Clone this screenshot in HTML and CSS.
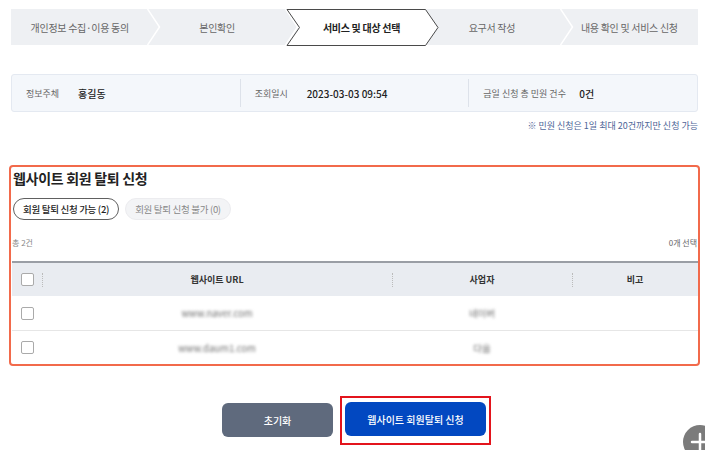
FILE: index.html
```
<!DOCTYPE html>
<html>
<head>
  <meta charset="UTF-8">
  <link rel="stylesheet" href="styles.css">
</head>
<body>
  <div class="page">
    <div class="stepper">
      <div class="step">개인정보 수집·이용 동의
        <svg class="sep" width="14" height="36" viewBox="0 0 14 36"><polyline points="0.5,0 12.5,18 0.5,36" fill="none" stroke="#fff" stroke-width="1.5"/></svg>
      </div>
      <div class="step">본인확인
        <svg class="sep" width="14" height="36" viewBox="0 0 14 36"><polyline points="0.5,0 12.5,18 0.5,36" fill="none" stroke="#fff" stroke-width="1.5"/></svg>
      </div>
      <div class="step active">
        <svg class="arrow" width="153" height="37" viewBox="0 0 153 37"><polygon points="1,0.5 139.5,0.5 152,18.5 139.5,36.5 1,36.5 13.5,18.5" fill="#fff" stroke="#4a4a4a" stroke-width="1"/></svg>
        <span class="step-label">서비스 및 대상 선택</span>
      </div>
      <div class="step">요구서 작성
        <svg class="sep" width="14" height="36" viewBox="0 0 14 36"><polyline points="0.5,0 12.5,18 0.5,36" fill="none" stroke="#fff" stroke-width="1.5"/></svg>
      </div>
      <div class="step">내용 확인 및 서비스 신청</div>
    </div>

    <div class="info-box">
      <div class="info-item"><span class="info-label">정보주체</span><span class="info-value">홍길동</span></div>
      <div class="info-item"><span class="info-label">조회일시</span><span class="info-value">2023-03-03 09:54</span></div>
      <div class="info-item"><span class="info-label wide">금일 신청 총 민원 건수</span><span class="info-value">0건</span></div>
    </div>
    <p class="note">※ 민원 신청은 1일 최대 20건까지만 신청 가능</p>

    <div class="panel">
      <h2 class="panel-title">웹사이트 회원 탈퇴 신청</h2>
      <div class="pills">
        <button class="pill active">회원 탈퇴 신청 가능 (2)</button>
        <button class="pill">회원 탈퇴 신청 불가 (0)</button>
      </div>
      <div class="count-row">
        <span>총 2건</span>
        <span>0개 선택</span>
      </div>
      <table class="site-table">
        <thead>
          <tr>
            <th class="col-check"><span class="checkbox"></span></th>
            <th class="col-url">웹사이트 URL</th>
            <th class="col-biz">사업자</th>
            <th class="col-note">비고</th>
          </tr>
        </thead>
        <tbody>
          <tr>
            <td class="col-check"><span class="checkbox"></span></td>
            <td><span class="blurred">www.naver.com</span></td>
            <td><span class="blurred">네이버</span></td>
            <td></td>
          </tr>
          <tr>
            <td class="col-check"><span class="checkbox"></span></td>
            <td><span class="blurred">www.daum1.com</span></td>
            <td><span class="blurred">다음</span></td>
            <td></td>
          </tr>
        </tbody>
      </table>
    </div>

    <div class="actions">
      <button class="btn btn-reset">초기화</button>
      <div class="highlight">
        <button class="btn btn-primary">웹사이트 회원탈퇴 신청</button>
      </div>
    </div>
  </div>
  <div class="fab">
    <svg width="34" height="34" viewBox="0 0 34 34"><path d="M17 9v16M9 17h16" stroke="#fff" stroke-width="2.5" stroke-linecap="round"/></svg>
  </div>
</body>
</html>
```

FILE: styles.css
```
body { margin: 0; width: 705px; height: 450px; overflow: hidden; background: #fff; font-family: "Noto Sans CJK KR", "Noto Sans", sans-serif; color: #222; position: relative; }
.page { padding: 9px 5px 0 9px; }
/* Stepper */
.stepper { display: flex; height: 36px; margin: 0 2px; background: #eef0f3; }
.step { flex: 1; position: relative; display: flex; align-items: center; justify-content: center; font-size: 10px; color: #666; letter-spacing: -0.3px; }
.step .sep { position: absolute; right: -13px; top: 0; z-index: 1; }
.step.active { z-index: 2; color: #222; font-weight: bold; }
.step.active .arrow { position: absolute; left: 0; top: 0; }
.step-label { position: relative; padding-left: 14px; }
/* Info */
.info-box { display: flex; margin: 29px 2px 0; height: 38px; background: #f4f7fb; border: 1px solid #e4e9f1; border-radius: 3px; box-sizing: border-box; }
.info-item { flex: 1; display: flex; align-items: center; padding-left: 14px; font-size: 9px; border-left: 1px solid #dde2ea; margin: 4px 0; }
.info-item:first-child { border-left: none; }
.info-label { color: #666; width: 52px; }
.info-label.wide { width: 96px; }
.info-value { color: #222; font-size: 10px; font-weight: 500; }
.note { margin: 7px 2px 0; text-align: right; font-size: 9px; color: #4e6597; }
/* Panel */
.panel { margin-top: 33px; border: 2px solid #f26a4b; border-radius: 4px; padding: 0 0 0 1px; }
.panel-title { margin: 0 0 0 1px; font-size: 14px; font-weight: bold; line-height: 22px; color: #222; letter-spacing: -0.3px; }
.pills { display: flex; gap: 6px; margin-top: 9px; margin-left: 1px; }
.pill { height: 22px; padding: 0 9px; border-radius: 11px; font-family: inherit; font-size: 9.5px; letter-spacing: -0.3px; border: 1px solid #ececef; background: #f3f4f6; color: #888; }
.pill.active { border: 1.5px solid #606060; background: #fff; color: #222; font-weight: 500; }
.count-row { display: flex; justify-content: space-between; margin: 16px 1px 0 0; font-size: 8px; color: #888; line-height: 14px; }
.count-row span:last-child { color: #666; }
.site-table { width: 100%; margin-top: 11px; border-collapse: collapse; font-size: 9px; }
.site-table th { height: 33px; padding: 0; background: #e9ecf1; border-top: 2px solid #9a9ea5; font-weight: bold; color: #333; position: relative; }
.site-table th + th::before { content: ""; position: absolute; left: 0; top: 10px; height: 14px; border-left: 1px dotted #bbb; }
.site-table td { height: 34px; padding: 0; text-align: center; border-bottom: 1px solid #e6e6e6; }
.site-table tbody tr:last-child td { border-bottom: none; height: 33px; }
.col-check { width: 30px; text-align: left; }
.col-url { width: 350px; }
.col-biz { width: 180px; }
.checkbox { display: block; width: 11px; height: 11px; margin-left: 9px; border: 1px solid #aaa; border-radius: 2px; background: #fff; }
.blurred { filter: blur(1.4px); color: #6f6f6f; font-size: 9.5px; }
/* Actions */
.actions { display: flex; justify-content: center; align-items: flex-start; gap: 7px; margin-top: 30px; padding-left: 4px; }
.btn { height: 34px; border: none; border-radius: 6px; color: #fff; font-family: inherit; font-size: 10px; font-weight: 500; }
.btn-reset { width: 111px; background: #5f6a7d; margin-top: 7px; }
.btn-primary { width: 141px; background: #0248c1; }
.highlight { border: 2px solid #e3141c; padding: 4px 3px 7px; }
.fab { position: absolute; left: 683px; top: 425px; width: 34px; height: 34px; border-radius: 50%; background: #7b7b7b; }
.fab svg { display: block; }
```
